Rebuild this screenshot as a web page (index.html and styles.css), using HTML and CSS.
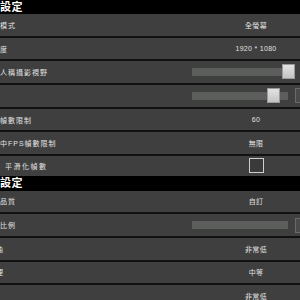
FILE: index.html
```html
<!DOCTYPE html>
<html lang="zh-Hant">
<head>
  <meta charset="UTF-8">
  <meta name="viewport" content="width=device-width, initial-scale=1.0">
  <title>設定</title>
  <link rel="stylesheet" href="styles.css">
</head>
<body>

  <div class="panel">
    <div class="section-title">顯示設定</div>
    <div class="row">
      <span class="label">顯示模式</span>
      <span class="value">全螢幕</span>
    </div>
    <div class="row">
      <span class="label">解析度</span>
      <span class="value">1920 * 1080</span>
    </div>
    <div class="row">
      <span class="label">第一人稱攝影視野</span>
      <div class="control">
        <div class="track track-full">
          <div class="thumb thumb-end"></div>
        </div>
      </div>
    </div>
    <div class="row">
      <span class="label">亮度</span>
      <div class="control">
        <div class="track">
          <div class="thumb thumb-mid"></div>
        </div>
        <div class="num-box"></div>
      </div>
    </div>
    <div class="row">
      <span class="label">最大幀數限制</span>
      <span class="value">60</span>
    </div>
    <div class="row">
      <span class="label">背景中FPS幀數限制</span>
      <span class="value">無限</span>
    </div>
    <div class="row">
      <span class="label sub">平滑化幀數</span>
      <span class="value"><span class="checkbox"></span></span>
    </div>

    <div class="section-title">圖像設定</div>
    <div class="row">
      <span class="label">畫面品質</span>
      <span class="value">自訂</span>
    </div>
    <div class="row">
      <span class="label">渲染比例</span>
      <div class="control">
        <div class="track"></div>
        <div class="num-box"></div>
      </div>
    </div>
    <div class="row">
      <span class="label cut">色調曲</span>
      <span class="value">非常低</span>
    </div>
    <div class="row">
      <span class="label cut">後處理</span>
      <span class="value">中等</span>
    </div>
    <div class="row">
      <span class="label">陰影</span>
      <span class="value">非常低</span>
    </div>
  </div>

</body>
</html>
```

FILE: styles.css
```css
* {
  box-sizing: border-box;
  margin: 0;
  padding: 0;
}

body {
  background-color: #000;
  font-family: "Liberation Sans", "Noto Sans CJK TC", sans-serif;
  color: #e2e2e2;
  overflow: hidden;
}

.panel {
  width: 300px;
  height: 300px;
  overflow: hidden;
}

.section-title {
  height: 14px;
  background-color: #000;
  color: #fff;
  font-size: 11px;
  font-weight: bold;
  line-height: 14px;
  margin-left: -23px;
  letter-spacing: 0.5px;
  white-space: nowrap;
}

.row + .section-title {
  height: 15px;
  line-height: 15px;
}

.row {
  display: flex;
  align-items: center;
  height: 23.7px;
  background-color: #3f3f3f;
  border-bottom: 2px solid #111;
}

.row:has(+ .section-title) {
  height: 19.4px;
  border-bottom: none;
}

.label {
  flex: 1;
  margin-left: -16px;
  font-size: 7px;
  letter-spacing: 1px;
  white-space: nowrap;
}

.label.sub {
  margin-left: 5px;
  letter-spacing: 1.5px;
}

.label.cut {
  margin-left: -20px;
}

.value {
  width: 88px;
  display: flex;
  justify-content: center;
  font-size: 7px;
  letter-spacing: 0.3px;
  white-space: nowrap;
}

.checkbox {
  width: 15px;
  height: 15px;
  border: 1.5px solid #cfcfcf;
  background-color: #3a3a3a;
}

.control {
  width: 108px;
  display: flex;
  align-items: center;
  gap: 7px;
  flex-shrink: 0;
}

.track {
  position: relative;
  width: 96px;
  height: 8px;
  background-color: #5b5e5b;
  flex-shrink: 0;
}

.track-full {
  width: 103px;
}

.thumb {
  position: absolute;
  top: -4px;
  width: 13px;
  height: 15px;
  background: linear-gradient(#e2e2e2, #c4c4c4);
  border: 1px solid #9a9a9a;
}

.thumb-end {
  right: 0;
}

.thumb-mid {
  left: 75px;
}

.num-box {
  width: 20px;
  height: 15px;
  background-color: #4a4a4a;
  border: 1px solid #6a6a6a;
  flex-shrink: 0;
}
```
